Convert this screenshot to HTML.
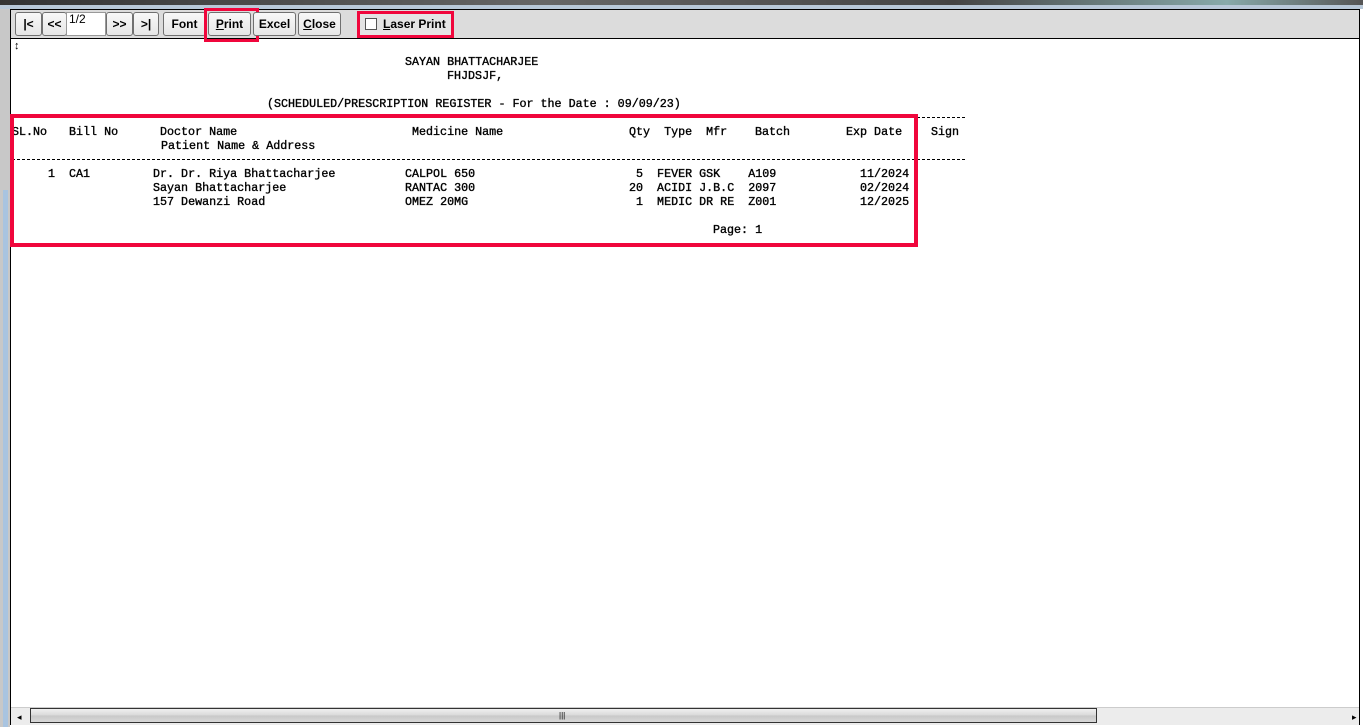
<!DOCTYPE html>
<html><head><style>
body{margin:0;width:1363px;height:727px;position:relative;overflow:hidden;background:#fff;font-family:"Liberation Sans",sans-serif}
.a{position:absolute}
.t{position:absolute;font-family:"Liberation Mono",monospace;font-size:11.7px;line-height:14px;white-space:pre;color:#000;-webkit-text-stroke:0.35px #000}
.b{position:absolute;top:12px;height:24px;background:linear-gradient(#f8f8f8,#e6e6e6);border:1px solid #707070;border-radius:3px;box-sizing:border-box;font-size:12px;font-weight:bold;text-align:center;line-height:22px}
.dash{position:absolute;border-top:1px dashed #000;height:0}
</style></head><body>
<div class="a" style="left:0;top:0;width:1363px;height:5px;background:linear-gradient(90deg,#333,#666 40%,#444 70%,#8aa 90%,#555)"></div>
<div class="a" style="left:0;top:5px;width:1363px;height:4px;background:#b8c8d8"></div>
<div class="a" style="left:0;top:9px;width:10px;height:718px;background:#c8c8c8"></div>
<div class="a" style="left:3px;top:190px;width:5px;height:537px;background:#a9c4e0"></div>
<div class="a" style="left:10px;top:9px;width:1350px;height:716px;border:1px solid #000;box-sizing:border-box;background:#fff"></div>
<div class="a" style="left:11px;top:10px;width:1348px;height:28px;background:#dcdcdc;border-bottom:1px solid #000"></div>
<div class="b" style="left:15px;width:27px">|&lt;</div>
<div class="b" style="left:42px;width:25px">&lt;&lt;</div>
<div class="a" style="left:66px;top:12px;width:40px;height:24px;background:#fff;border:1px solid #999;box-sizing:border-box;font-size:12px;padding-left:2px;line-height:12px">1/2</div>
<div class="b" style="left:106px;width:27px">&gt;&gt;</div>
<div class="b" style="left:133px;width:26px">&gt;|</div>
<div class="b" style="left:163px;width:43px">Font</div>
<div class="b" style="left:208px;width:43px"><u>P</u>rint</div>
<div class="a" style="left:204px;top:8px;width:55px;height:34px;border:3px solid #f0063c;box-sizing:border-box"></div>
<div class="b" style="left:253px;width:43px">Excel</div>
<div class="b" style="left:298px;width:43px"><u>C</u>lose</div>
<div class="a" style="left:357px;top:11px;width:97px;height:27px;border:3px solid #f0063c;box-sizing:border-box;background:#e4e4e4"></div>
<div class="a" style="left:365px;top:18px;width:12px;height:12px;border:1px solid #555;background:#fff;box-sizing:border-box"></div>
<div class="a" style="left:383px;top:17px;font-size:12px;font-weight:bold"><u>L</u>aser Print</div>
<div class="a" style="left:14px;top:40px;font-size:11px">↕</div>

<div class="t" style="left:405px;top:55px">SAYAN BHATTACHARJEE</div>
<div class="t" style="left:447px;top:69px">FHJDSJF,</div>
<div class="t" style="left:267px;top:97px">(SCHEDULED/PRESCRIPTION REGISTER - For the Date : 09/09/23)</div>
<div class="dash" style="left:12px;top:117px;width:953px"></div>
<div class="t" style="left:12px;top:125px">SL.No</div>
<div class="t" style="left:69px;top:125px">Bill No</div>
<div class="t" style="left:160px;top:125px">Doctor Name</div>
<div class="t" style="left:161px;top:139px">Patient Name &amp; Address</div>
<div class="t" style="left:412px;top:125px">Medicine Name</div>
<div class="t" style="left:629px;top:125px">Qty  Type  Mfr</div>
<div class="t" style="left:755px;top:125px">Batch</div>
<div class="t" style="left:846px;top:125px">Exp Date</div>
<div class="t" style="left:931px;top:125px">Sign</div>
<div class="dash" style="left:12px;top:159px;width:953px"></div>
<div class="t" style="left:48px;top:167px">1</div>
<div class="t" style="left:69px;top:167px">CA1</div>
<div class="t" style="left:153px;top:167px">Dr. Dr. Riya Bhattacharjee
Sayan Bhattacharjee
157 Dewanzi Road</div>
<div class="t" style="left:405px;top:167px">CALPOL 650
RANTAC 300
OMEZ 20MG</div>
<div class="t" style="left:629px;top:167px"> 5  FEVER GSK    A109
20  ACIDI J.B.C  2097
 1  MEDIC DR RE  Z001</div>
<div class="t" style="left:860px;top:167px">11/2024
02/2024
12/2025</div>
<div class="t" style="left:713px;top:223px">Page: 1</div>
<div class="a" style="left:10px;top:114px;width:908px;height:133px;border:4px solid #f0063c;box-sizing:border-box"></div>

<div class="a" style="left:11px;top:707px;width:1348px;height:17px;background:#ececec;border-top:1px solid #ccc"></div>
<div class="a" style="left:17px;top:712px;font-size:9px">◂</div>
<div class="a" style="left:30px;top:708px;width:1067px;height:15px;border:1px solid #333;box-sizing:border-box;background:linear-gradient(#f0f0f0,#d8d8d8 50%,#c8c8c8 51%,#d8d8d8)"></div>
<div class="a" style="left:559px;top:711px;font-size:8px">|||</div>
<div class="a" style="left:1352px;top:712px;font-size:9px">▸</div>
</body></html>
